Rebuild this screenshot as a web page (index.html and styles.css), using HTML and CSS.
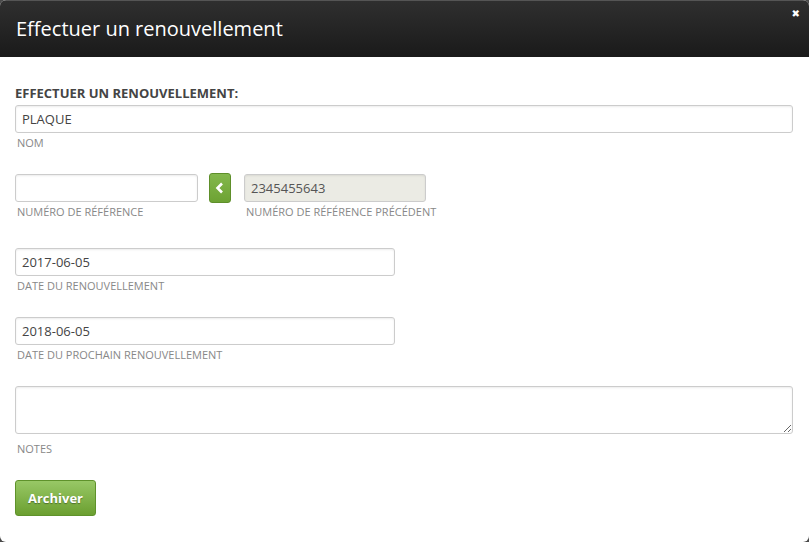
FILE: index.html
```html
<!DOCTYPE html>
<html lang="fr">
<head>
    <meta charset="UTF-8">
    <title>Effectuer un renouvellement</title>
    <link rel="stylesheet" href="styles.css">
</head>
<body>
    <div class="modal">
        <div class="modal-header">
            <h3>Effectuer un renouvellement</h3>
            <span class="close">&#10006;</span>
        </div>
        <div class="modal-body">
            <h4>EFFECTUER UN RENOUVELLEMENT:</h4>

            <div class="field">
                <input type="text" class="full" value="PLAQUE">
                <span class="help">NOM</span>
            </div>

            <div class="field ref-row">
                <div class="col">
                    <input type="text" class="short" value="">
                    <span class="help">NUMÉRO DE RÉFÉRENCE</span>
                </div>
                <button class="copy-btn" type="button">
                    <svg width="10" height="12" viewBox="0 0 10 12"><path d="M7 1.5 L2.5 6 L7 10.5" fill="none" stroke="#fff" stroke-width="2.6"/></svg>
                </button>
                <div class="col">
                    <input type="text" class="short prev" value="2345455643" disabled>
                    <span class="help">NUMÉRO DE RÉFÉRENCE PRÉCÉDENT</span>
                </div>
            </div>

            <div class="field">
                <input type="text" class="medium" value="2017-06-05">
                <span class="help">DATE DU RENOUVELLEMENT</span>
            </div>

            <div class="field">
                <input type="text" class="medium" value="2018-06-05">
                <span class="help">DATE DU PROCHAIN RENOUVELLEMENT</span>
            </div>

            <div class="field notes">
                <textarea></textarea>
                <span class="help">NOTES</span>
            </div>

            <button class="btn-green" type="button">Archiver</button>
        </div>
    </div>
</body>
</html>
```

FILE: styles.css
```css
html, body {
    margin: 0;
    padding: 0;
    background: #4a4a4a;
}
body {
    font-family: 'Open Sans', sans-serif;
    color: #444;
}
.modal {
    width: 809px;
    height: 542px;
    background: #fff;
    border-radius: 6px;
    overflow: hidden;
}
.modal-header {
    position: relative;
    background: linear-gradient(to bottom, #2f2f2f, #1a1a1a);
    border-top: 1px solid #555;
    box-sizing: border-box;
    height: 57px;
}
.modal-header h3 {
    margin: 0;
    padding: 14px 0 0 16px;
    font-weight: normal;
    font-size: 20px;
    line-height: 28px;
    color: #fff;
}
.close {
    position: absolute;
    right: 9px;
    top: 7px;
    color: #fff;
    font-size: 10px;
    font-family: 'DejaVu Sans', sans-serif;
    font-weight: bold;
}
.modal-body {
    padding: 28px 15px 0 15px;
}
h4 {
    margin: 0 0 4px 0;
    font-size: 13px;
    line-height: 16px;
    font-weight: bold;
    color: #444;
}
.field {
    margin-bottom: 24px;
}
input, textarea {
    font-family: 'Open Sans', sans-serif;
    font-size: 13px;
    color: #444;
    border: 1px solid #ccc;
    border-radius: 3px;
    box-shadow: inset 0 1px 2px rgba(0, 0, 0, 0.08);
    box-sizing: border-box;
    padding: 0 6px;
    height: 28px;
    display: block;
    margin: 0;
    background: #fff;
    outline: none;
}
input.full {
    width: 778px;
}
input.medium {
    width: 380px;
}
input.short {
    width: 183px;
}
input.prev {
    width: 182px;
}
input:disabled {
    background: #ebebe4;
    color: #555;
}
.help {
    display: block;
    margin: 3px 0 0 2px;
    font-size: 11px;
    line-height: 14px;
    color: #888;
}
.ref-row {
    display: flex;
    align-items: flex-start;
    margin-bottom: 29px;
}
.copy-btn {
    width: 22px;
    height: 30px;
    margin: -1px 13px 0 11px;
    padding: 0;
    border: 1px solid #5e8f2a;
    border-radius: 3px;
    background: linear-gradient(to bottom, #84b84d, #6da233);
    display: flex;
    align-items: center;
    justify-content: center;
}
.notes textarea {
    width: 778px;
    height: 48px;
    resize: vertical;
}
.notes .help {
    margin-top: 8px;
}
.notes {
    margin-bottom: 24px;
}
.btn-green {
    width: 81px;
    height: 36px;
    border: 1px solid #5f922b;
    border-radius: 3px;
    background: linear-gradient(to bottom, #98c866, #6b9f30);
    color: #fff;
    font-family: 'Open Sans', sans-serif;
    font-weight: bold;
    font-size: 13px;
    text-shadow: 0 1px 1px rgba(0, 0, 0, 0.35);
    padding: 0;
}
```
